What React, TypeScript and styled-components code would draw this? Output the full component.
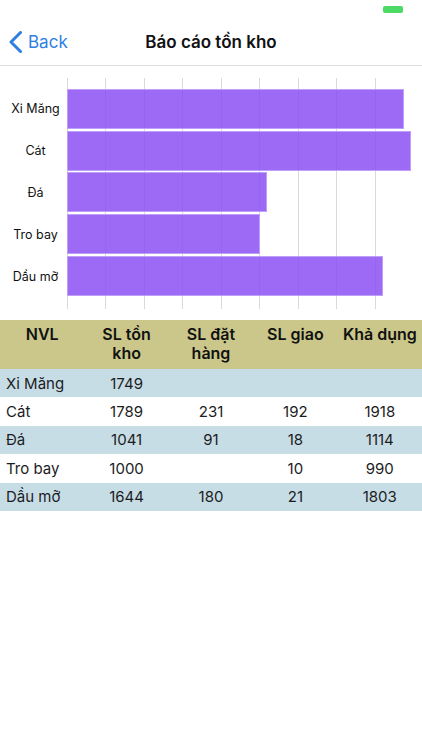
import * as React from 'react';
import styled, { createGlobalStyle } from 'styled-components';

const GlobalStyle = createGlobalStyle`
  html, body {
    margin: 0;
    padding: 0;
    background: #fff;
  }
  body {
    font-family: Inter, "Liberation Sans", sans-serif;
    color: #1c1c1e;
  }
`;

interface Stock {
  name: string;
  onHand: number;
  ordered?: number;
  delivered?: number;
  available?: number;
}

const stocks: Stock[] = [
  { name: 'Xi Măng', onHand: 1749 },
  { name: 'Cát', onHand: 1789, ordered: 231, delivered: 192, available: 1918 },
  { name: 'Đá', onHand: 1041, ordered: 91, delivered: 18, available: 1114 },
  { name: 'Tro bay', onHand: 1000, delivered: 10, available: 990 },
  { name: 'Dầu mỡ', onHand: 1644, ordered: 180, delivered: 21, available: 1803 },
];

// px per unit of stock; one grid step is 200 units
const SCALE = 0.1925;
const GRID_STEP = 200 * SCALE;

const Screen = styled.div`
  width: 422px;
  min-height: 750px;
  background: #fff;
`;

const StatusBar = styled.div`
  height: 20px;
  display: flex;
  justify-content: flex-end;
  align-items: flex-start;
  padding: 6px 19px 0 0;
  box-sizing: border-box;
`;

const Battery = styled.div`
  width: 20px;
  height: 7px;
  border-radius: 2px;
  background: #4cd964;
`;

const NavBar = styled.header`
  height: 45px;
  display: grid;
  grid-template-columns: 100px 1fr 100px;
  align-items: center;
  border-bottom: 1px solid #dcdcdc;
`;

const BackButton = styled.button`
  display: flex;
  align-items: center;
  gap: 6px;
  padding: 0 0 2px 9px;
  border: 0;
  background: none;
  color: #2f7fe3;
  font-family: inherit;
  font-size: 17px;
  cursor: pointer;
`;

const Title = styled.h1`
  margin: 0 0 2px;
  text-align: center;
  font-size: 17px;
  font-weight: 600;
  color: #111;
  white-space: nowrap;
`;

const Chart = styled.section`
  display: flex;
  margin-top: 12px;
  height: 231px;
`;

const LabelColumn = styled.div`
  width: 67px;
  flex: none;
  display: flex;
  flex-direction: column;
  padding: 10px 0 12px 4px;
  box-sizing: border-box;
`;

const BarLabel = styled.div`
  height: 42.4px;
  display: flex;
  align-items: center;
  justify-content: center;
  font-size: 12.5px;
  color: #111;
`;

const Plot = styled.div`
  flex: 1;
  display: flex;
  flex-direction: column;
  padding: 10px 0 12px;
  box-sizing: border-box;
  background: repeating-linear-gradient(
      to right,
      #d9d9d9 0 1px,
      transparent 1px ${GRID_STEP}px
    )
    0 0 / ${GRID_STEP * 8 + 1}px 100% no-repeat;
`;

const BarSlot = styled.div`
  height: 42.4px;
  display: flex;
  align-items: center;
`;

const Bar = styled.div`
  height: 40px;
  box-sizing: border-box;
  background: rgba(138, 78, 243, 0.84);
  border: 1px solid rgba(196, 165, 252, 0.9);
`;

const Table = styled.div`
  margin-top: 11px;
`;

const HeaderRow = styled.div`
  display: grid;
  grid-template-columns: repeat(5, 1fr);
  background: #cbc78a;
  height: 49px;
  padding-top: 5px;
  box-sizing: border-box;
`;

const HeadCell = styled.div`
  text-align: center;
  font-size: 16px;
  font-weight: 600;
  line-height: 19px;
  color: #111;
`;

const Row = styled.div<{ $shaded: boolean }>`
  display: grid;
  grid-template-columns: repeat(5, 1fr);
  align-items: center;
  height: 28.4px;
  background: ${p => (p.$shaded ? '#c7dde6' : '#fff')};
`;

const Cell = styled.div<{ $first?: boolean }>`
  text-align: ${p => (p.$first ? 'left' : 'center')};
  padding-left: ${p => (p.$first ? '6px' : '0')};
  font-size: 15px;
  color: #1c1c1e;
  white-space: nowrap;
`;

function ChevronLeft() {
  return (
    <svg width="13" height="22" viewBox="0 0 13 22">
      <polyline
        points="11.5,1.5 2,11 11.5,20.5"
        fill="none"
        stroke="#2f7fe3"
        strokeWidth="3"
        strokeLinecap="round"
        strokeLinejoin="round"
      />
    </svg>
  );
}

export default function App() {
  return (
    <Screen>
      <GlobalStyle />
      <StatusBar>
        <Battery />
      </StatusBar>
      <NavBar>
        <BackButton>
          <ChevronLeft />
          Back
        </BackButton>
        <Title>Báo cáo tồn kho</Title>
        <div />
      </NavBar>

      <Chart>
        <LabelColumn>
          {stocks.map(s => (
            <BarLabel key={s.name}>{s.name}</BarLabel>
          ))}
        </LabelColumn>
        <Plot>
          {stocks.map(s => (
            <BarSlot key={s.name}>
              <Bar style={{ width: s.onHand * SCALE }} />
            </BarSlot>
          ))}
        </Plot>
      </Chart>

      <Table>
        <HeaderRow>
          <HeadCell>NVL</HeadCell>
          <HeadCell>SL tồn<br />kho</HeadCell>
          <HeadCell>SL đặt<br />hàng</HeadCell>
          <HeadCell>SL giao</HeadCell>
          <HeadCell>Khả dụng</HeadCell>
        </HeaderRow>
        {stocks.map((s, i) => (
          <Row key={s.name} $shaded={i % 2 === 0}>
            <Cell $first>{s.name}</Cell>
            <Cell>{s.onHand}</Cell>
            <Cell>{s.ordered ?? ''}</Cell>
            <Cell>{s.delivered ?? ''}</Cell>
            <Cell>{s.available ?? ''}</Cell>
          </Row>
        ))}
      </Table>
    </Screen>
  );
}
